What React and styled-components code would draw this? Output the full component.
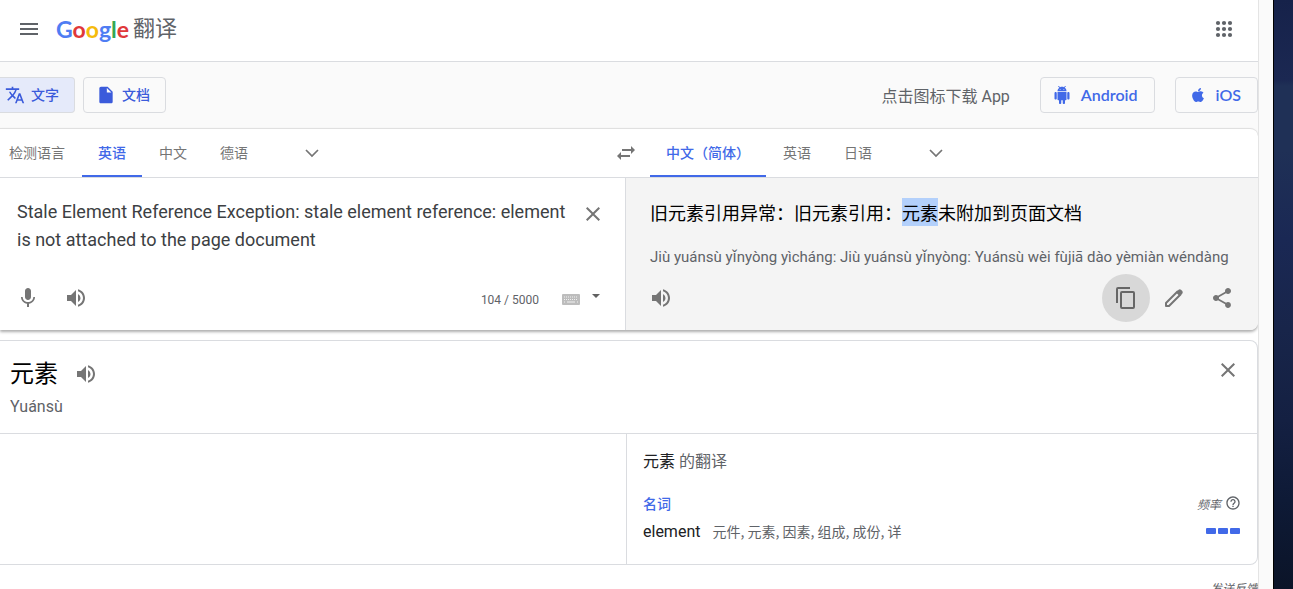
import React from 'react';
import styled, { createGlobalStyle } from 'styled-components';
import { FaApple } from 'react-icons/fa';
import {
    MdClose,
    MdHelpOutline,
    MdInsertDriveFile,
    MdMenu,
    MdMic,
    MdShare,
    MdTranslate,
    MdVolumeUp
} from 'react-icons/md';

const GlobalStyle = createGlobalStyle`
    *, *::before, *::after {
        box-sizing: border-box;
    }

    body {
        margin: 0;
        overflow: hidden;
        font-family: Roboto, 'Noto Sans CJK SC', sans-serif;
        color: #202124;
        background: #fff;
    }

    button, textarea {
        font: inherit;
        letter-spacing: inherit;
    }

    svg {
        display: block;
        flex: none;
    }
`;

const Screen = styled.div`
    display: grid;
    grid-template-columns: minmax(0, 1fr) 15px 20px;
    height: 100vh;
    overflow: hidden;
`;

const Page = styled.div`
    height: 100vh;
    overflow: hidden;
`;

const ScrollTrack = styled.div`
    background: #fafafa;
    border-left: 1px solid #e4e4e4;
`;

const Desktop = styled.div`
    border-left: 1px solid #000;
    background: linear-gradient(180deg, #16224a 0, #1b2852 80px, #1f3056 86px, #1f3056 150px, #1a2854 240px, #18254a 330px, #142042 420px, #0e1a36 500px, #0b1428 100%);
`;

const Header = styled.header`
    display: flex;
    align-items: center;
    height: 62px;
    padding: 0 22px 4px 17px;
    border-bottom: 1px solid #dadce0;
`;

const PlainButton = styled.button`
    display: flex;
    align-items: center;
    justify-content: center;
    flex: none;
    width: ${props => props.$size || 24}px;
    height: ${props => props.$size || 24}px;
    padding: 0;
    border: 0;
    border-radius: 50%;
    color: #757575;
    background: ${props => props.$active ? '#d8d8d8' : 'transparent'};
    cursor: pointer;
`;

const HeaderButton = styled(PlainButton)`
    color: #5f6368;
`;

const Brand = styled.a`
    display: flex;
    align-items: center;
    gap: 4px;
    margin-left: 15px;
    margin-right: auto;
    color: #5f6368;
    font-size: 22px;
    line-height: 32px;
    text-decoration: none;
`;

const Wordmark = styled.span`
    font-family: Lato, sans-serif;
    font-size: 23px;
    font-weight: 700;
`;

const Letter = styled.span`
    color: ${props => props.$color};
`;

const Toolbar = styled.div`
    display: flex;
    align-items: center;
    gap: 8px;
    height: 66px;
    background: #fafafa;
`;

const Chip = styled.button`
    display: flex;
    align-items: center;
    gap: ${props => props.$gap || 6}px;
    height: 36px;
    padding: ${props => props.$padding || '0 15px 0 12px'};
    border: 1px solid #dadce0;
    border-radius: 4px;
    color: #3b5bdb;
    background: transparent;
    font-size: 14px;
    font-weight: 500;
    line-height: 20px;
    white-space: nowrap;
    cursor: pointer;
`;

const SelectedChip = styled(Chip)`
    padding-left: 5px;
    border-left: 0;
    border-radius: 0 4px 4px 0;
    background: #e5eafa;
`;

const StoreLinks = styled.div`
    display: flex;
    align-items: center;
    gap: 20px;
    margin-left: auto;
`;

const StoreLabel = styled.span`
    margin-right: 10px;
    color: #5f6368;
    font-size: 16px;
`;

const StoreLink = styled(Chip)`
    color: #4169e8;
    font-family: Lato, sans-serif;
    font-size: 16px;
    font-weight: 600;
    text-decoration: none;
`;

const Translator = styled.main`
    border-top: 1px solid #e0e0e0;
    border-radius: 0 8px 8px 0;
    background: #fff;
    box-shadow: 0 2px 3px rgba(0, 0, 0, 0.32);
    overflow: hidden;
`;

const ToolbarBackdrop = styled.div`
    background: linear-gradient(#fafafa 50px, #fff 50px);
`;

const LanguageBar = styled.div`
    display: grid;
    grid-template-columns: 602fr 48px 608fr;
    height: 49px;
    border-bottom: 1px solid #dadce0;
`;

const Tabs = styled.div`
    display: flex;
    align-items: center;
    gap: 1px;
`;

const Tab = styled.button`
    height: 48px;
    padding: ${props => props.$first ? '0 16px 0 9px' : '0 16px'};
    border: 0;
    border-bottom: 2px solid ${props => props.$active ? '#4169e8' : 'transparent'};
    color: ${props => props.$active ? '#4169e8' : '#757575'};
    background: none;
    font-size: 14px;
    font-weight: ${props => props.$active ? 500 : 400};
    white-space: nowrap;
    cursor: pointer;
`;

const MoreButton = styled(PlainButton)`
    margin-left: 35px;
`;

const SwapButton = styled(PlainButton)`
    justify-self: center;
`;

const Panels = styled.div`
    display: grid;
    grid-template-columns: 626fr 632fr;
    min-height: 152px;
`;

const SourcePanel = styled.section`
    display: flex;
    flex-direction: column;
    border-right: 1px solid #dadce0;
`;

const SourceRow = styled.div`
    display: flex;
    align-items: flex-start;
    flex: 1;
    padding: 20px 20px 0 17px;
`;

const SourceText = styled.textarea`
    flex: 1;
    min-width: 0;
    height: 56px;
    padding: 0;
    border: 0;
    outline: 0;
    resize: none;
    overflow: hidden;
    color: #3c4043;
    background: none;
    font-size: 18px;
    line-height: 28px;
`;

const ClearButton = styled(PlainButton)`
    margin-top: 4px;
`;

const PanelFooter = styled.div`
    display: flex;
    align-items: center;
    padding: ${props => props.$padding};
`;

const Counter = styled.span`
    margin-left: auto;
    margin-right: 23px;
    padding-top: 4px;
    color: #5f6368;
    font-size: 12px;
`;

const InputTools = styled(PlainButton)`
    align-items: flex-start;
    width: auto;
    padding-top: 8px;
    border-radius: 0;
    gap: 12px;
    color: #bdbdbd;
`;

const TargetPanel = styled.section`
    display: flex;
    flex-direction: column;
    background: #f4f4f4;
`;

const TargetText = styled.p`
    margin: 0;
    padding: 20px 24px 0;
    color: #000;
    font-family: 'Noto Sans CJK SC', sans-serif;
    font-size: 18px;
    line-height: 28px;
`;

const Highlight = styled.mark`
    display: inline-block;
    color: inherit;
    background: #b3d0fb;
`;

const Pinyin = styled.p`
    flex: 1;
    margin: 0;
    padding: 19px 24px 0;
    color: #5f6368;
    font-size: 15px;
    line-height: 24px;
    white-space: nowrap;
`;

const Spacer = styled.span`
    flex: 1;
`;

const Details = styled.section`
    margin-top: 10px;
    border: 1px solid #dadce0;
    border-left: 0;
    border-radius: 0 8px 8px 0;
`;

const DetailsHeader = styled.div`
    display: flex;
    justify-content: space-between;
    height: 93px;
    padding: 17px 17px 0 10px;
    border-bottom: 1px solid #dadce0;
`;

const TermRow = styled.div`
    display: flex;
    align-items: center;
    gap: 16px;
`;

const Term = styled.h1`
    margin: 0;
    color: #000;
    font-size: 24px;
    font-weight: 400;
    line-height: 32px;
`;

const TermPinyin = styled.div`
    margin-top: 5px;
    color: #5f6368;
    font-size: 16px;
    line-height: 24px;
`;

const DetailsBody = styled.div`
    display: grid;
    grid-template-columns: 626fr 631fr;
    height: 130px;
`;

const Translations = styled.div`
    padding: 16px 17px 0 16px;
    border-left: 1px solid #dadce0;
`;

const TranslationsTitle = styled.h2`
    margin: 0 0 15px;
    color: #5f6368;
    font-size: 16px;
    font-weight: 400;
    line-height: 24px;
`;

const TitleTerm = styled.span`
    color: #202124;
`;

const Row = styled.div`
    display: flex;
    align-items: center;
    height: 28px;
`;

const PartOfSpeech = styled.span`
    margin-right: auto;
    color: #4169e8;
    font-size: 14px;
    font-weight: 500;
`;

const Frequency = styled.span`
    margin-right: 4px;
    color: #5f6368;
    font-size: 12px;
    font-style: italic;
`;

const HelpButton = styled(PlainButton)`
    color: #5f6368;
`;

const Word = styled.span`
    margin-right: 12px;
    font-size: 16px;
`;

const Synonyms = styled.span`
    margin-right: auto;
    color: #5f6368;
    font-family: 'Noto Sans CJK SC', sans-serif;
    font-size: 14px;
`;

const Bars = styled.span`
    display: flex;
    gap: 2px;
`;

const Bar = styled.span`
    width: 10px;
    height: 6px;
    border-radius: 1px;
    background: #4169e8;
`;

const Feedback = styled.a`
    display: block;
    margin-top: 15px;
    color: #5f6368;
    font-size: 12px;
    font-style: italic;
    line-height: 18px;
    text-align: right;
    text-decoration: none;
`;

const logoLetters = [
    ['G', '#4f7df3'],
    ['o', '#e0383a'],
    ['o', '#f5bb0c'],
    ['g', '#4f7df3'],
    ['l', '#34a853'],
    ['e', '#e0383a']
];

const sourceLanguages = ['检测语言', '英语', '中文', '德语'];
const targetLanguages = ['中文（简体）', '英语', '日语'];

const AppsIcon = () => (
    <svg width='18' height='18' viewBox='0 0 18 18' fill='currentColor'>
        { [3, 9, 15].map(y => [3, 9, 15].map(x => <circle key={ `${x}-${y}` } cx={ x } cy={ y } r='2.1' />)) }
    </svg>
);

const AndroidIcon = () => (
    <svg width='18' height='18' viewBox='0 0 24 24' fill='currentColor'>
        <path d='M6 18c0 .55.45 1 1 1h1v3.5c0 .83.67 1.5 1.5 1.5s1.5-.67 1.5-1.5V19h2v3.5c0 .83.67 1.5 1.5 1.5s1.5-.67 1.5-1.5V19h1c.55 0 1-.45 1-1V8H6v10zM3.500 8C2.670 8 2 8.670 2 9.500v7c0 .83.67 1.500 1.500 1.500S5 17.330 5 16.500v-7C5 8.670 4.330 8 3.500 8zm17 0c-.83 0-1.5.67-1.5 1.5v7c0 .83.67 1.5 1.5 1.5s1.5-.67 1.5-1.5v-7c0-.83-.67-1.5-1.5-1.5zm-4.970-5.840l1.300-1.300c.2-.2.2-.51 0-.71-.2-.2-.51-.2-.71 0l-1.480 1.480C13.850 1.230 12.950 1 12 1c-.96 0-1.860.23-2.660.63L7.850.15c-.2-.2-.51-.2-.71 0-.2.2-.2.51 0 .71l1.310 1.310C6.970 3.260 6 5.010 6 7h12c0-1.990-.97-3.750-2.470-4.840zM10 5H9V4h1v1zm5 0h-1V4h1v1z' />
    </svg>
);

const ChevronIcon = () => (
    <svg width='16' height='16' viewBox='0 0 16 16' fill='none' stroke='currentColor' strokeWidth='1.7'>
        <path d='M2 5l6 6 6-6' />
    </svg>
);

const SwapIcon = () => (
    <svg width='20' height='16' viewBox='0 0 20 16' fill='currentColor'>
        <path d='M6 4h9V1l4 4-4 4V6H6zM14 10H5V7l-4 4 4 4v-3h9z' />
    </svg>
);

const KeyboardIcon = () => (
    <svg width='18' height='11' viewBox='0 0 18 11'>
        <rect width='18' height='11' rx='1' fill='currentColor' />
        <path d='M2 3h14M2 5.500h14' stroke='#fff' strokeWidth='1' strokeDasharray='1 1' opacity='0.8' />
        <path d='M2 8h1M5 8h8M15 8h1' stroke='#fff' strokeWidth='1' opacity='0.8' />
    </svg>
);

const CaretIcon = () => (
    <svg width='8' height='4' viewBox='0 0 8 4'>
        <path d='M0 0h8L4 4z' fill='#616161' />
    </svg>
);

const CopyIcon = () => (
    <svg width='24' height='24' viewBox='0 0 24 24' fill='none' stroke='#666' strokeWidth='2'>
        <path d='M3 17V3q0-1 1-1h12' />
        <rect x='7' y='6' width='13' height='16' rx='1' />
    </svg>
);

const PencilIcon = () => (
    <svg width='20' height='20' viewBox='0 0 20 20'>
        <path d='M2 18v-3L13.500 3.500l3 3L5 18z' fill='none' stroke='currentColor' strokeWidth='2' strokeLinejoin='round' />
        <path d='M12 4.500l2.600-2.700q1.200-1 2.400 0l1.300 1.300q1 1.200 0 2.400L15.500 8z' fill='currentColor' />
    </svg>
);

class App extends React.Component {
    constructor(props) {
        super(props);

        this.state = {
            text: 'Stale Element Reference Exception: stale element reference: element is not attached to the page document',
            source: '英语',
            target: '中文（简体）'
        };

        this.onTextChange = this.onTextChange.bind(this);
    }

    onTextChange(event) {
        this.setState({ text: event.target.value });
    }

    renderTabs(languages, key) {
        return languages.map(language => (
            <Tab
                key={ language }
                type='button'
                $first={ language === '检测语言' }
                $active={ this.state[key] === language }
                onClick={ () => this.setState({ [key]: language }) }
            >
                { language }
            </Tab>
        ));
    }

    render() {
        return (
            <Screen>
                <GlobalStyle />
                <Page>
                    <Header>
                        <HeaderButton type='button' aria-label='主菜单'><MdMenu size={ 24 } /></HeaderButton>
                        <Brand href='#'>
                            <Wordmark>
                                { logoLetters.map(([letter, color], i) => <Letter key={ i } $color={ color }>{ letter }</Letter>) }
                            </Wordmark>
                            <span>翻译</span>
                        </Brand>
                        <HeaderButton type='button' aria-label='Google 应用'><AppsIcon /></HeaderButton>
                    </Header>
                    <Toolbar>
                        <SelectedChip type='button'><MdTranslate size={ 20 } />文字</SelectedChip>
                        <Chip type='button'><MdInsertDriveFile size={ 20 } />文档</Chip>
                        <StoreLinks>
                            <StoreLabel>点击图标下载 App</StoreLabel>
                            <StoreLink as='a' href='#' $gap={ 10 } $padding='0 16px 0 12px'><AndroidIcon />Android</StoreLink>
                            <StoreLink as='a' href='#' $gap={ 10 } $padding='0 16px 0 14px'><FaApple size={ 16 } />iOS</StoreLink>
                        </StoreLinks>
                    </Toolbar>
                    <ToolbarBackdrop>
                        <Translator>
                            <LanguageBar>
                                <Tabs>
                                    { this.renderTabs(sourceLanguages, 'source') }
                                    <MoreButton type='button' aria-label='更多源语言'><ChevronIcon /></MoreButton>
                                </Tabs>
                                <SwapButton type='button' $size={ 48 } aria-label='交换语言'><SwapIcon /></SwapButton>
                                <Tabs>
                                    { this.renderTabs(targetLanguages, 'target') }
                                    <MoreButton type='button' aria-label='更多目标语言'><ChevronIcon /></MoreButton>
                                </Tabs>
                            </LanguageBar>
                            <Panels>
                                <SourcePanel>
                                    <SourceRow>
                                        <SourceText aria-label='原文' spellCheck={ false } value={ this.state.text } onChange={ this.onTextChange } />
                                        <ClearButton type='button' aria-label='清除原文'><MdClose size={ 24 } /></ClearButton>
                                    </SourceRow>
                                    <PanelFooter $padding='0 25px 8px 4px'>
                                        <PlainButton type='button' $size={ 48 } aria-label='语音输入'><MdMic size={ 24 } /></PlainButton>
                                        <PlainButton type='button' $size={ 48 } aria-label='朗读原文'><MdVolumeUp size={ 24 } /></PlainButton>
                                        <Counter>{ this.state.text.length } / 5000</Counter>
                                        <InputTools type='button' aria-label='输入法'>
                                            <KeyboardIcon />
                                            <CaretIcon />
                                        </InputTools>
                                    </PanelFooter>
                                </SourcePanel>
                                <TargetPanel>
                                    <TargetText>旧元素引用异常：旧元素引用：<Highlight>元素</Highlight>未附加到页面文档</TargetText>
                                    <Pinyin>Jiù yuánsù yǐnyòng yìcháng: Jiù yuánsù yǐnyòng: Yuánsù wèi fùjiā dào yèmiàn wéndàng</Pinyin>
                                    <PanelFooter $padding='0 12px 8px 11px'>
                                        <PlainButton type='button' $size={ 48 } aria-label='朗读译文'><MdVolumeUp size={ 24 } /></PlainButton>
                                        <Spacer />
                                        <PlainButton type='button' $size={ 48 } $active aria-label='复制译文'><CopyIcon /></PlainButton>
                                        <PlainButton type='button' $size={ 48 } aria-label='修改译文'><PencilIcon /></PlainButton>
                                        <PlainButton type='button' $size={ 48 } aria-label='分享译文'><MdShare size={ 24 } /></PlainButton>
                                    </PanelFooter>
                                </TargetPanel>
                            </Panels>
                        </Translator>
                    </ToolbarBackdrop>
                    <Details>
                        <DetailsHeader>
                            <div>
                                <TermRow>
                                    <Term>元素</Term>
                                    <PlainButton type='button' aria-label='朗读'><MdVolumeUp size={ 24 } /></PlainButton>
                                </TermRow>
                                <TermPinyin>Yuánsù</TermPinyin>
                            </div>
                            <PlainButton type='button' aria-label='关闭'><MdClose size={ 24 } /></PlainButton>
                        </DetailsHeader>
                        <DetailsBody>
                            <div />
                            <Translations>
                                <TranslationsTitle><TitleTerm>元素</TitleTerm> 的翻译</TranslationsTitle>
                                <Row>
                                    <PartOfSpeech>名词</PartOfSpeech>
                                    <Frequency>频率</Frequency>
                                    <HelpButton type='button' $size={ 15 } aria-label='频率说明'><MdHelpOutline size={ 16 } /></HelpButton>
                                </Row>
                                <Row>
                                    <Word>element</Word>
                                    <Synonyms>元件, 元素, 因素, 组成, 成份, 详</Synonyms>
                                    <Bars><Bar /><Bar /><Bar /></Bars>
                                </Row>
                            </Translations>
                        </DetailsBody>
                    </Details>
                    <Feedback href='#'>发送反馈</Feedback>
                </Page>
                <ScrollTrack />
                <Desktop />
            </Screen>
        );
    }
}

export default App;
